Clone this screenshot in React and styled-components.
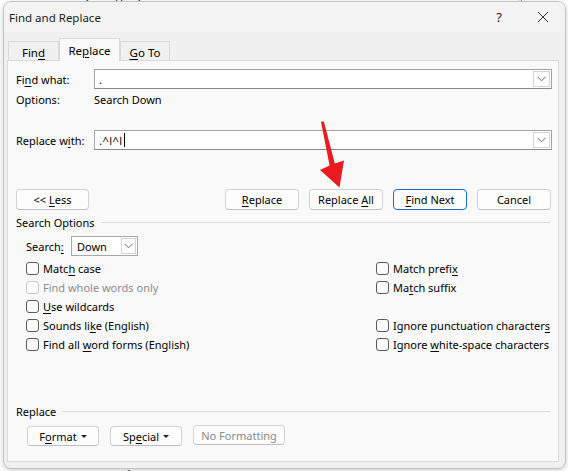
import React from "react";
import styled, { createGlobalStyle } from "styled-components";

const Global = createGlobalStyle`
  html, body { margin: 0; padding: 0; background: #fff; }
  body { font-family: "Noto Sans", "Segoe UI", sans-serif; }
  * { box-sizing: border-box; }
`;

const Page = styled.div`
  position: relative;
  width: 568px;
  height: 471px;
  overflow: hidden;
  background: #fff;
`;

const DocText = styled.div`
  display: flex;
  flex-direction: column;
  justify-content: space-between;
  height: 100%;
  font-family: "Liberation Serif", serif;
  font-size: 15px;
  color: #1a1a1a;
`;

const DocLine = styled.div`
  white-space: nowrap;
  line-height: 14px;
  margin: ${(p) => (p.$top ? "-13px 0 0 30px" : "0 0 -12px 40px")};
  letter-spacing: 1px;
`;

const Dialog = styled.div`
  position: absolute;
  left: 3px;
  top: 1px;
  width: 563px;
  height: 468px;
  border: 1px solid #c2c2c2;
  border-radius: 8px;
  background: #f0f0f0;
  box-shadow: 0 2px 6px rgba(0, 0, 0, 0.18);
  display: flex;
  flex-direction: column;
  overflow: hidden;
  font-size: 11px;
  color: #000;
`;

const TitleBar = styled.div`
  height: 30px;
  display: flex;
  align-items: center;
  background: #f3f3f3;
  padding-left: 5px;
`;

const Title = styled.div`
  flex: 1;
  font-size: 11.5px;
  color: #1b1b1b;
`;

const TitleButton = styled.div`
  width: 44px;
  height: 30px;
  display: flex;
  align-items: center;
  justify-content: center;
  font-size: 13px;
  color: #222;
`;

const Body = styled.div`
  flex: 1;
  display: flex;
  flex-direction: column;
  padding: 6px 6px 6px 3px;
`;

const TabRow = styled.div`
  display: flex;
  align-items: flex-end;
  height: 22px;
  margin-left: 1px;
  position: relative;
  z-index: 1;
`;

const Tab = styled.div`
  width: ${(p) => p.$w}px;
  height: ${(p) => (p.$active ? 23 : 19)}px;
  margin-bottom: ${(p) => (p.$active ? -1 : 0)}px;
  display: flex;
  align-items: center;
  justify-content: center;
  background: ${(p) => (p.$active ? "#f9f9f9" : "#f0f0f0")};
  border: 1px solid #d9d9d9;
  border-bottom: none;
  padding-top: ${(p) => (p.$active ? 0 : 2)}px;
  font-size: 11.5px;
`;

const Panel = styled.div`
  flex: 1;
  display: flex;
  flex-direction: column;
  background: #f9f9f9;
  border: 1px solid #dadada;
  padding: 8px 6px 0 8px;
`;

const Key = styled.span`
  text-decoration: underline;
  text-underline-offset: 2px;
  text-decoration-thickness: 1px;
`;

const FieldRow = styled.div`
  display: grid;
  grid-template-columns: 78px 1fr;
  align-items: center;
  height: ${(p) => p.$h || 20}px;
  margin-top: ${(p) => p.$mt || 0}px;
  white-space: nowrap;
`;

const Combo = styled.div`
  height: 20px;
  display: flex;
  align-items: stretch;
  background: #fff;
  border: 1px solid #a3a3a3;
  border-bottom-color: #8a8a8a;
`;

const ComboValue = styled.div`
  flex: 1;
  display: flex;
  align-items: center;
  padding-left: 4px;
  font-size: 11px;
  letter-spacing: 0.5px;
`;

const Caret = styled.span`
  display: inline-block;
  width: 1px;
  height: 14px;
  background: #000;
  margin-left: 1px;
`;

const DropButton = styled.div`
  width: ${(p) => p.$w || 17}px;
  display: flex;
  align-items: center;
  justify-content: center;
  border: 1px solid #d4d4d4;
  margin: 1px;
  background: #fff;
`;

const Chevron = () => (
  <svg width="9" height="6" viewBox="0 0 9 6">
    <path d="M0.5 0.8 L4.5 4.8 L8.5 0.8" fill="none" stroke="#6a6a6a" strokeWidth="1" />
  </svg>
);

const ButtonRow = styled.div`
  display: flex;
  align-items: center;
  gap: ${(p) => p.$gap || 10}px;
  height: ${(p) => p.$h || 21}px;
  margin-top: ${(p) => p.$mt || 0}px;
  padding-left: ${(p) => p.$pl || 0}px;
  padding-right: 1px;
`;

const Spacer = styled.div`
  flex: 1;
`;

const Button = styled.div`
  width: ${(p) => p.$w}px;
  height: 100%;
  display: flex;
  align-items: center;
  justify-content: center;
  gap: 4px;
  white-space: nowrap;
  background: #fdfdfd;
  border: 1px solid ${(p) => (p.$primary ? "#1a6fc4" : "#d2d2d2")};
  border-bottom-color: ${(p) => (p.$primary ? "#1a6fc4" : "#bfbfbf")};
  border-radius: 4px;
  font-size: 11px;
  color: ${(p) => (p.$disabled ? "#8a8a8a" : "#000")};
  margin-top: ${(p) => (p.$disabled ? -2 : 0)}px;
`;

const DownTri = styled.span`
  width: 0;
  height: 0;
  border-left: 3px solid transparent;
  border-right: 3px solid transparent;
  border-top: 3px solid #222;
  margin-top: 1px;
`;

const SectionHeader = styled.div`
  display: flex;
  align-items: center;
  gap: 6px;
  height: 14px;
  margin-top: ${(p) => p.$mt}px;
  padding-right: 2px;
  font-size: 11px;
  white-space: nowrap;
  &::after {
    content: "";
    flex: 1;
    border-top: 1px solid #dcdcdc;
  }
`;

const SearchRow = styled.div`
  display: flex;
  align-items: center;
  height: 20px;
  margin-top: 7px;
  padding-left: 10px;
`;

const SearchLabel = styled.div`
  width: 45px;
`;

const Select = styled.div`
  width: 67px;
  height: 20px;
  display: flex;
  align-items: stretch;
  background: #fff;
  border: 1px solid #a8a8a8;
`;

const SelectValue = styled.div`
  flex: 1;
  display: flex;
  align-items: center;
  padding-left: 5px;
`;

const CheckGrid = styled.div`
  display: grid;
  grid-template-columns: 350px 1fr;
  grid-auto-rows: 19px;
  margin-top: 3px;
  padding-left: 10px;
`;

const CheckItem = styled.label`
  display: flex;
  align-items: center;
  gap: 4px;
  white-space: nowrap;
  color: ${(p) => (p.$disabled ? "#8c8c8c" : "#000")};
  font-size: 11px;
`;

const Box = styled.span`
  width: 13px;
  height: 13px;
  border: 1px solid ${(p) => (p.$disabled ? "#c8c8c8" : "#5c5c5c")};
  border-radius: 3px;
  background: #fbfbfb;
`;

const Arrow = styled.svg`
  position: absolute;
  left: 315px;
  top: 118px;
`;

const Check = ({ children, disabled }) => (
  <CheckItem $disabled={disabled}>
    <Box $disabled={disabled} />
    <span>{children}</span>
  </CheckItem>
);

export default function App() {
  return (
    <Page>
      <Global />
      <DocText>
        <DocLine $top>
          and the paragraph continues with more words set in the document body before the dialog opens
        </DocLine>
        <DocLine>
          a new line of text begins here and it runs on across the page beneath the open dialog window
        </DocLine>
      </DocText>
      <Dialog>
        <TitleBar>
          <Title>Find and Replace</Title>
          <TitleButton>?</TitleButton>
          <TitleButton>
            <svg width="12" height="12" viewBox="0 0 12 12">
              <path d="M1 1 L11 11 M11 1 L1 11" stroke="#333" strokeWidth="1" />
            </svg>
          </TitleButton>
        </TitleBar>
        <Body>
          <TabRow>
            <Tab $w={51}>
              <span>
                Fin<Key>d</Key>
              </span>
            </Tab>
            <Tab $w={61} $active>
              <span>
                Re<Key>p</Key>lace
              </span>
            </Tab>
            <Tab $w={50}>
              <span>
                <Key>G</Key>o To
              </span>
            </Tab>
          </TabRow>
          <Panel>
            <FieldRow>
              <span>
                Fi<Key>n</Key>d what:
              </span>
              <Combo>
                <ComboValue>.</ComboValue>
                <DropButton>
                  <Chevron />
                </DropButton>
              </Combo>
            </FieldRow>
            <FieldRow $h={16} $mt={2}>
              <span>Options:</span>
              <span>Search Down</span>
            </FieldRow>
            <FieldRow $mt={23}>
              <span>
                Replace w<Key>i</Key>th:
              </span>
              <Combo>
                <ComboValue>
                  .^l^l
                  <Caret />
                </ComboValue>
                <DropButton>
                  <Chevron />
                </DropButton>
              </Combo>
            </FieldRow>
            <ButtonRow $mt={39}>
              <Button $w={73}>
                <span>
                  &lt;&lt; <Key>L</Key>ess
                </span>
              </Button>
              <Spacer />
              <Button $w={74}>
                <span>
                  <Key>R</Key>eplace
                </span>
              </Button>
              <Button $w={74}>
                <span>
                  Replace <Key>A</Key>ll
                </span>
              </Button>
              <Button $w={74} $primary>
                <span>
                  <Key>F</Key>ind Next
                </span>
              </Button>
              <Button $w={74}>
                <span>Cancel</span>
              </Button>
            </ButtonRow>
            <SectionHeader $mt={5}>Search Options</SectionHeader>
            <SearchRow>
              <SearchLabel>
                Search<Key>:</Key>
              </SearchLabel>
              <Select>
                <SelectValue>Down</SelectValue>
                <DropButton $w={15}>
                  <Chevron />
                </DropButton>
              </Select>
            </SearchRow>
            <CheckGrid>
              <Check>
                Matc<Key>h</Key> case
              </Check>
              <Check>
                Match prefi<Key>x</Key>
              </Check>
              <Check disabled>Find whole words only</Check>
              <Check>
                Ma<Key>t</Key>ch suffix
              </Check>
              <Check>
                <Key>U</Key>se wildcards
              </Check>
              <span />
              <Check>
                Sounds li<Key>k</Key>e (English)
              </Check>
              <Check>
                Ignore punctuation character<Key>s</Key>
              </Check>
              <Check>
                Find all <Key>w</Key>ord forms (English)
              </Check>
              <Check>
                Ignore <Key>w</Key>hite-space characters
              </Check>
            </CheckGrid>
            <SectionHeader $mt={50}>Replace</SectionHeader>
            <ButtonRow $mt={8} $h={20} $pl={11} $gap={11}>
              <Button $w={72}>
                <span>
                  F<Key>o</Key>rmat
                </span>
                <DownTri />
              </Button>
              <Button $w={72}>
                <span>
                  Sp<Key>e</Key>cial
                </span>
                <DownTri />
              </Button>
              <Button $w={92} $disabled>
                <span>No Formatting</span>
              </Button>
            </ButtonRow>
          </Panel>
        </Body>
      </Dialog>
      <Arrow width="35" height="72" viewBox="315 118 35 72">
        <polygon
          points="321,122 323.8,121.3 334.8,163.5 344,160.5 339.5,187.5 320,170 329.6,165.5"
          fill="#ea1a1f"
        />
      </Arrow>
    </Page>
  );
}
